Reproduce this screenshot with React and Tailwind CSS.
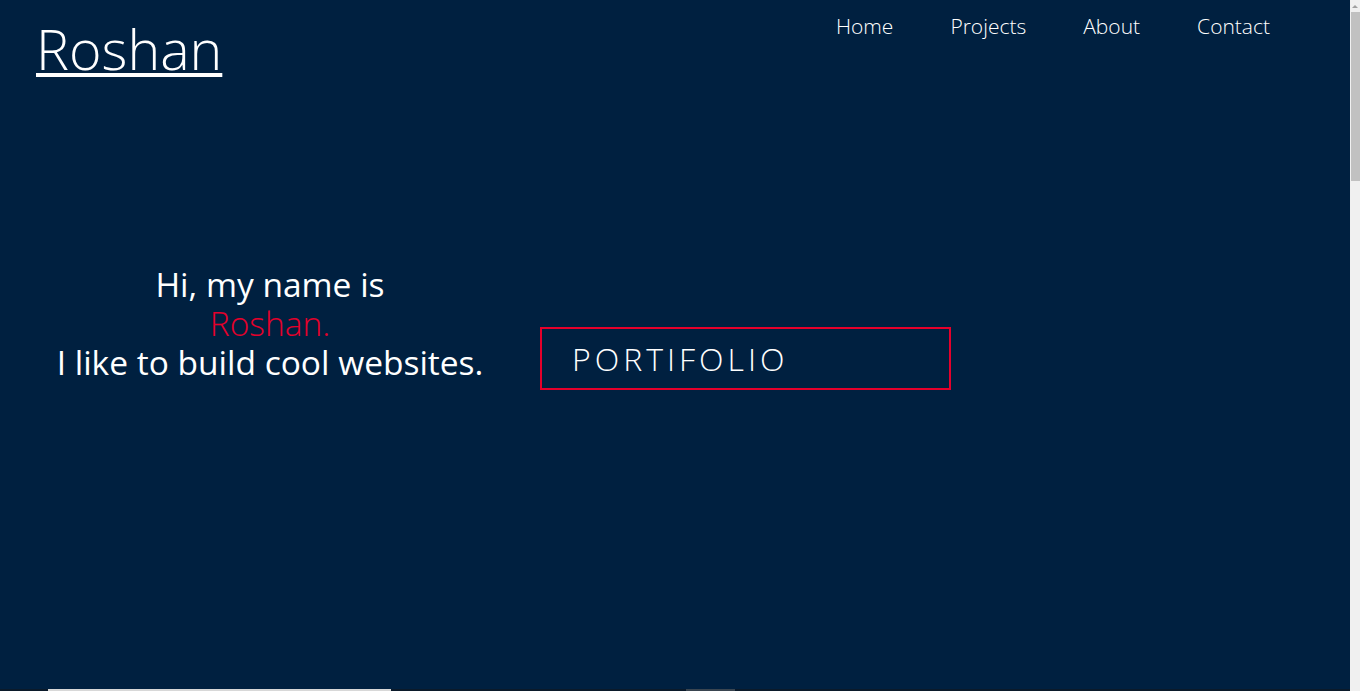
import React from 'react';

const font = { fontFamily: '"Open Sans", "DejaVu Sans", sans-serif' };

export default function App() {
  return (
    <div className="flex h-[691px] overflow-hidden bg-[#002040]">
      <div className="flex-1 text-white" style={font}>
        {/* Hero */}
        <section className="h-[689px] flex flex-col">
          <header className="flex justify-between items-start">
            <a href="#" className="ml-[36px] mt-[17px] text-[55.5px] leading-[64px] font-light underline decoration-[4px] underline-offset-[3px] text-white">
              Roshan
            </a>
            <nav className="flex gap-[57px] mr-[80px] mt-[11px] text-[21px] font-light">
              <a href="#">Home</a>
              <a href="#">Projects</a>
              <a href="#">About</a>
              <a href="#">Contact</a>
            </nav>
          </header>

          <div className="flex items-start mt-[184px]">
            <div className="w-[540px] text-center text-[33.5px] leading-[39px]">
              <p>Hi, my name is</p>
              <p className="text-[#e5002b] font-light">Roshan.</p>
              <p>I like to build cool websites.</p>
            </div>
            <div className="mt-[62px] w-[411px] h-[63px] border-2 border-[#e5002b] flex items-center pl-[30px]">
              <span className="text-[32px] font-light tracking-[4px]">PORTIFOLIO</span>
            </div>
          </div>
        </section>

        {/* Next section */}
        <section className="bg-[#0b1a2a] h-[300px] relative">
          <div className="ml-[48px] w-[343px] h-[2px] bg-[#d8d8d8]"></div>
          <div className="absolute left-[686px] top-0 w-[49px] h-[2px] bg-[#3a4550]"></div>
        </section>
      </div>

      {/* Scrollbar */}
      <div className="w-[10px] bg-[#f0f0f0] flex flex-col items-end">
        <div className="h-[12px] w-full flex items-center justify-center">
          <div className="w-0 h-0 border-l-[3px] border-r-[3px] border-b-[3px] border-l-transparent border-r-transparent border-b-[#a0a0a0]"></div>
        </div>
        <div className="w-[9px] h-[169px] bg-[#c1c1c1]"></div>
      </div>
    </div>
  );
}
